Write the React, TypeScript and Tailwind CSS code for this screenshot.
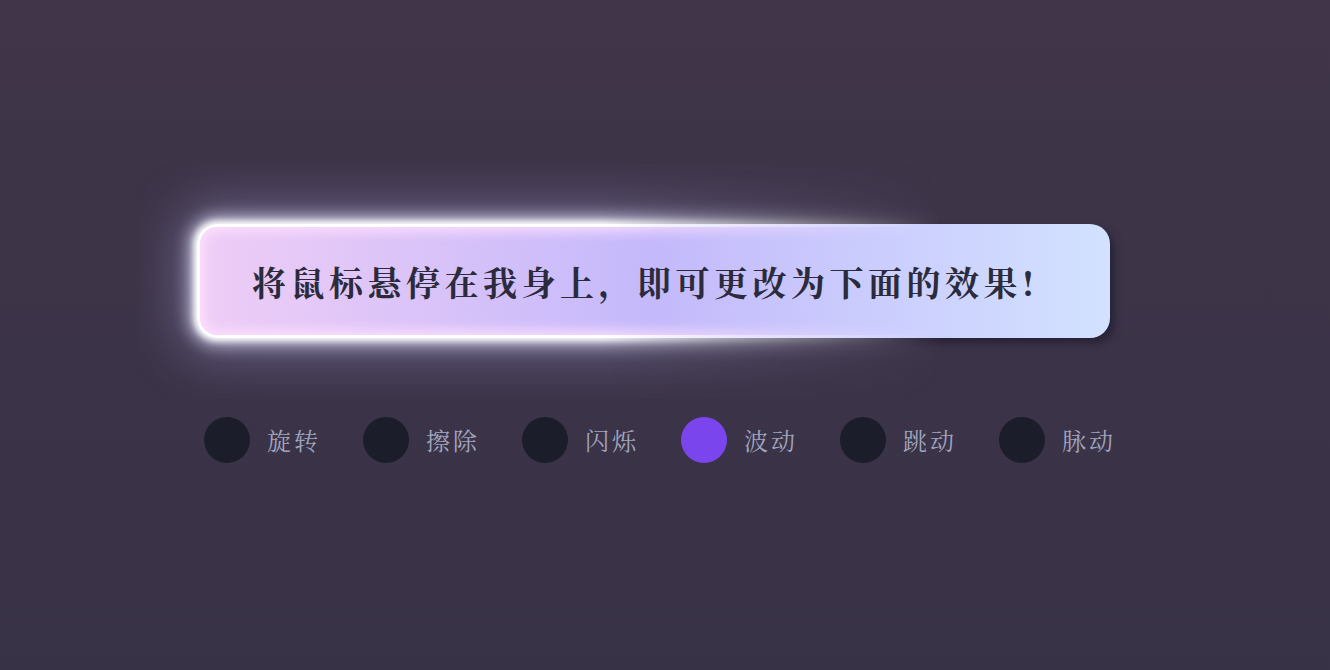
import { useState } from "react";

const effects = ["旋转", "擦除", "闪烁", "波动", "跳动", "脉动"];

const kai = {
  fontFamily:
    "KaiTi, STKaiti, 'AR PL UKai CN', 'AR PL KaitiM GB', 'Noto Serif CJK SC', 'Noto Sans CJK SC', serif",
};

export default function App() {
  const [active, setActive] = useState("波动");

  return (
    <div className="flex h-[670px] w-full flex-col items-center bg-gradient-to-b from-[#403549] to-[#383246] pr-[23px]">
      {/* Hover card */}
      <div className="relative mt-[224px] h-[114px] w-[913px] rounded-[20px] shadow-[4px_5px_8px_rgba(20,18,40,0.55)]">
        <div className="absolute inset-0 rounded-[20px] bg-gradient-to-r from-[#efcdf6] via-[#c4b9fb] to-[#d2e2ff]" />
        {/* wave glow, fading to the right */}
        <div className="absolute -inset-[60px] [mask-image:linear-gradient(to_right,black_0%,black_45%,transparent_78%)]">
          <div className="absolute inset-[60px] rounded-[20px] border-[3px] border-white shadow-[0_0_6px_3px_rgba(255,255,255,1),0_0_16px_8px_rgba(235,235,255,0.7),0_0_50px_22px_rgba(170,160,225,0.35),inset_0_0_12px_5px_rgba(255,225,255,0.85)]" />
        </div>
        <div
          className="relative flex h-full items-center pl-[55px] text-[34px] font-bold tracking-[4.5px] text-[#2b2b3b]"
          style={kai}
        >
          将鼠标悬停在我身上，即可更改为下面的效果!
        </div>
      </div>

      {/* Effect picker */}
      <div className="mt-[79px] flex w-[913px] gap-[41px] pl-[7px]">
        {effects.map((name) => (
          <button
            key={name}
            type="button"
            onClick={() => setActive(name)}
            className="flex items-center gap-[17px]"
          >
            <span
              className={
                active === name
                  ? "h-[46px] w-[46px] rounded-full bg-[#7b45ee]"
                  : "h-[46px] w-[46px] rounded-full bg-[#1c1d2a]"
              }
            />
            <span className="w-[55px] text-left text-[24px] tracking-[3px] text-[#a0a5bf]" style={kai}>
              {name}
            </span>
          </button>
        ))}
      </div>
    </div>
  );
}
